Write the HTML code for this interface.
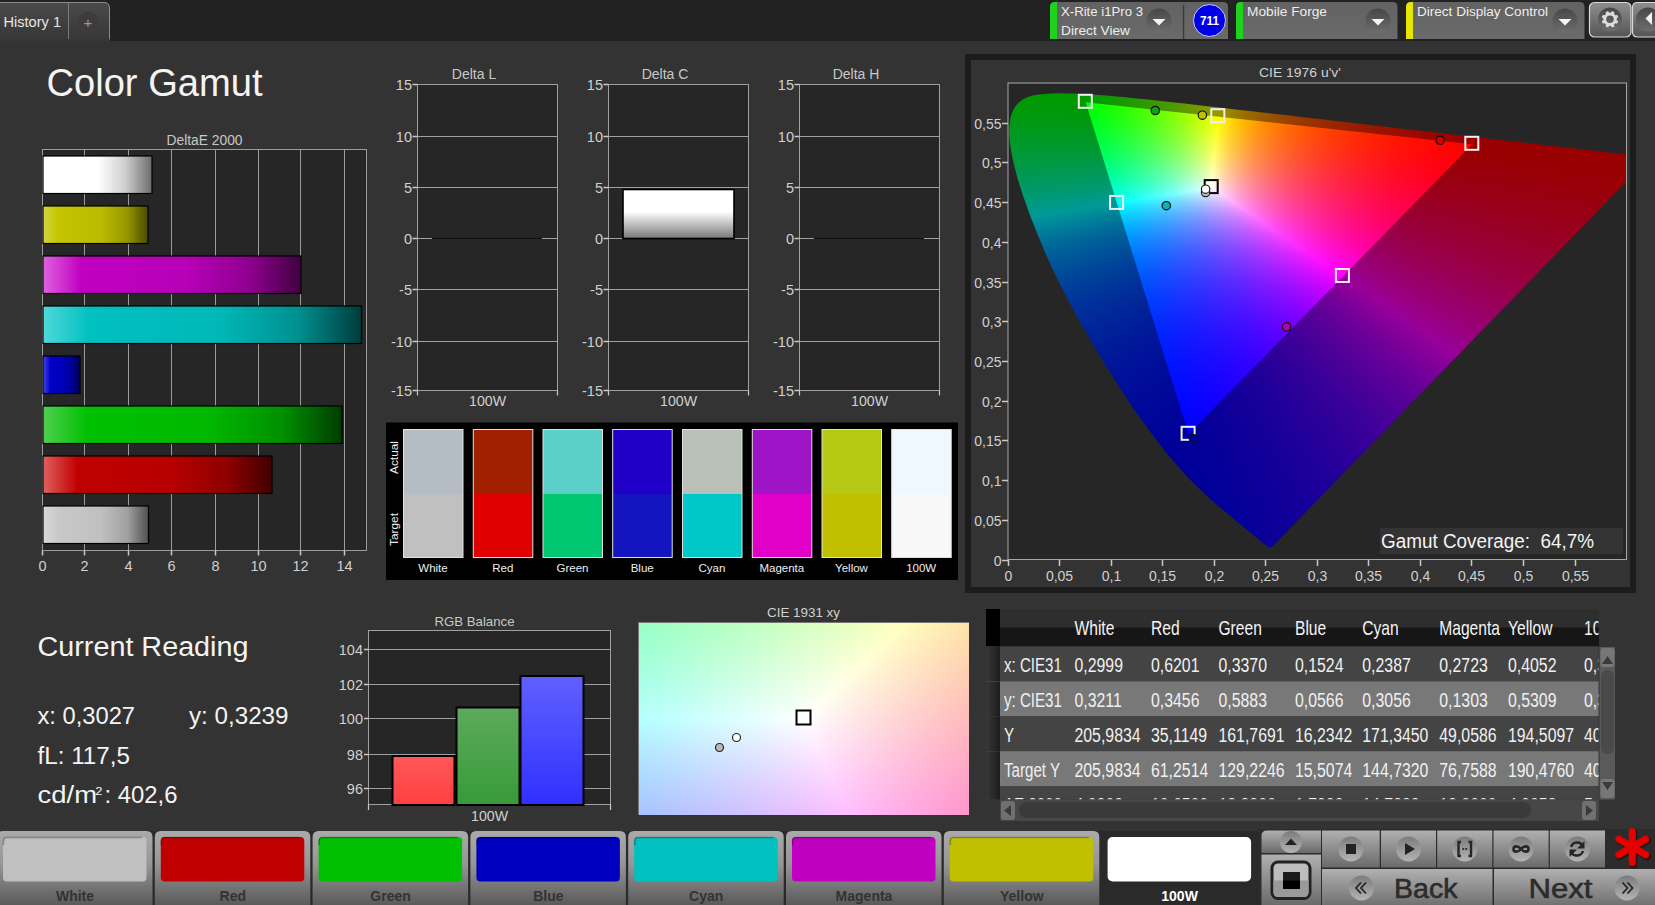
<!DOCTYPE html>
<html><head><meta charset="utf-8"><style>
html,body{margin:0;padding:0;background:#333;width:1655px;height:905px;overflow:hidden}
svg{position:absolute;left:0;top:0}
text{font-family:"Liberation Sans", sans-serif}
canvas{position:absolute}
</style></head><body>
<svg width="1655" height="905"><defs><linearGradient id="tabg" x1="0" y1="0" x2="0" y2="1"><stop offset="0" stop-color="#4a4a4a"/><stop offset="1" stop-color="#363636"/></linearGradient><radialGradient id="plusg" cx="0.5" cy="0.4" r="0.6"><stop offset="0" stop-color="#3a3a3a"/><stop offset="1" stop-color="#444"/></radialGradient><linearGradient id="devg" x1="0" y1="0" x2="0" y2="1"><stop offset="0" stop-color="#626262"/><stop offset="1" stop-color="#6a6a6a"/></linearGradient><linearGradient id="ddg" x1="0" y1="0" x2="0" y2="1"><stop offset="0" stop-color="#474747"/><stop offset="1" stop-color="#6e6e6e"/></linearGradient><linearGradient id="btng" x1="0" y1="0" x2="0" y2="1"><stop offset="0" stop-color="#8e8e8e"/><stop offset="1" stop-color="#545454"/></linearGradient><linearGradient id="bar0" x1="0" y1="0" x2="1" y2="0"><stop offset="0" stop-color="#ffffff"/><stop offset="0.3" stop-color="#ffffff"/><stop offset="0.5" stop-color="#ffffff"/><stop offset="0.75" stop-color="#d0d0d0"/><stop offset="1" stop-color="#6c6c6c"/></linearGradient><linearGradient id="bar1" x1="0" y1="0" x2="1" y2="0"><stop offset="0" stop-color="#d4d440"/><stop offset="0.15" stop-color="#c4c400"/><stop offset="0.55" stop-color="#bcbc00"/><stop offset="0.8" stop-color="#969600"/><stop offset="1" stop-color="#4a4a00"/></linearGradient><linearGradient id="bar2" x1="0" y1="0" x2="1" y2="0"><stop offset="0" stop-color="#e060e0"/><stop offset="0.15" stop-color="#c000c0"/><stop offset="0.55" stop-color="#b800b8"/><stop offset="0.8" stop-color="#900090"/><stop offset="1" stop-color="#400040"/></linearGradient><linearGradient id="bar3" x1="0" y1="0" x2="1" y2="0"><stop offset="0" stop-color="#50d8d8"/><stop offset="0.15" stop-color="#00c0c0"/><stop offset="0.55" stop-color="#00b8b8"/><stop offset="0.8" stop-color="#009090"/><stop offset="1" stop-color="#003c3c"/></linearGradient><linearGradient id="bar4" x1="0" y1="0" x2="1" y2="0"><stop offset="0" stop-color="#4848e8"/><stop offset="0.2" stop-color="#0000c8"/><stop offset="0.55" stop-color="#0000b8"/><stop offset="0.8" stop-color="#000090"/><stop offset="1" stop-color="#000050"/></linearGradient><linearGradient id="bar5" x1="0" y1="0" x2="1" y2="0"><stop offset="0" stop-color="#50d050"/><stop offset="0.15" stop-color="#00c000"/><stop offset="0.55" stop-color="#00b800"/><stop offset="0.8" stop-color="#009000"/><stop offset="1" stop-color="#003c00"/></linearGradient><linearGradient id="bar6" x1="0" y1="0" x2="1" y2="0"><stop offset="0" stop-color="#e06060"/><stop offset="0.15" stop-color="#c00000"/><stop offset="0.55" stop-color="#b80000"/><stop offset="0.8" stop-color="#900000"/><stop offset="1" stop-color="#400000"/></linearGradient><linearGradient id="bar7" x1="0" y1="0" x2="1" y2="0"><stop offset="0" stop-color="#d8d8d8"/><stop offset="0.15" stop-color="#c8c8c8"/><stop offset="0.55" stop-color="#c0c0c0"/><stop offset="0.8" stop-color="#a0a0a0"/><stop offset="1" stop-color="#505050"/></linearGradient><linearGradient id="dcg" x1="0" y1="0" x2="0" y2="1"><stop offset="0" stop-color="#ffffff"/><stop offset="0.45" stop-color="#ffffff"/><stop offset="1" stop-color="#787878"/></linearGradient><linearGradient id="rbr" x1="0" y1="0" x2="0" y2="1"><stop offset="0" stop-color="#ff5858"/><stop offset="1" stop-color="#ff4040"/></linearGradient><linearGradient id="rbg" x1="0" y1="0" x2="0" y2="1"><stop offset="0" stop-color="#5caa5c"/><stop offset="1" stop-color="#389a38"/></linearGradient><linearGradient id="rbb" x1="0" y1="0" x2="0" y2="1"><stop offset="0" stop-color="#6060ff"/><stop offset="1" stop-color="#3030ff"/></linearGradient><linearGradient id="lcg" x1="0" y1="0" x2="1" y2="0"><stop offset="0" stop-color="#383838"/><stop offset="1" stop-color="#1c1c1c"/></linearGradient><linearGradient id="bbg" x1="0" y1="0" x2="0" y2="1"><stop offset="0" stop-color="#aaaaaa"/><stop offset="0.45" stop-color="#969696"/><stop offset="1" stop-color="#5a5a5a"/></linearGradient><linearGradient id="mbg" x1="0" y1="0" x2="0" y2="1"><stop offset="0" stop-color="#b0b0b0"/><stop offset="1" stop-color="#6a6a6a"/></linearGradient><linearGradient id="mcg" x1="0" y1="0" x2="0" y2="1"><stop offset="0" stop-color="#7c7c7c"/><stop offset="1" stop-color="#b4b4b4"/></linearGradient></defs>
<rect x="0" y="0" width="1655" height="41" fill="#222222"/>
<path d="M-2 2.5 H104 Q109.5 2.5 109.5 8 V41 H-2 Z" fill="url(#tabg)"/>
<path d="M-2 2.5 H104 Q109.5 2.5 109.5 8 V39.5" fill="none" stroke="#8a8a8a" stroke-width="1"/>
<line x1="68.5" y1="3" x2="68.5" y2="39" stroke="#7a7a7a" stroke-width="1"/>
<circle cx="88" cy="23" r="11" fill="#3c3c3c"/>
<text x="88" y="28" font-size="15" fill="#9a9a9a" text-anchor="middle">+</text>
<text x="3.5" y="27.2" font-size="14.5" fill="#e6e6e6" textLength="57.5" lengthAdjust="spacingAndGlyphs">History 1</text>
<path d="M1050 39 V7 Q1050 2 1055 2 H1223 Q1228 2 1228 7 V39 Z" fill="url(#devg)"/>
<path d="M1050 39 V7 Q1050 2 1055 2 H1057 V39 Z" fill="#1ed21e"/>
<line x1="1183.5" y1="5" x2="1183.5" y2="39" stroke="#3c3c3c" stroke-width="1.5"/>
<text x="1061" y="16" font-size="12.5" fill="#eeeeee" textLength="82" lengthAdjust="spacingAndGlyphs">X-Rite i1Pro 3</text>
<text x="1061" y="35" font-size="12.5" fill="#eeeeee" textLength="69" lengthAdjust="spacingAndGlyphs">Direct View</text>
<circle cx="1159" cy="21" r="12.5" fill="url(#ddg)"/>
<path d="M1152.5 19 H1165.5 L1159 25.5 Z" fill="#f4f4f4"/>
<circle cx="1209.5" cy="20.5" r="16" fill="#0000e8" stroke="#c8c8ff" stroke-width="1"/>
<text x="1209.5" y="25" font-size="12" fill="#ffffff" text-anchor="middle" font-weight="bold" textLength="19" lengthAdjust="spacingAndGlyphs">711</text>
<path d="M1236 39 V7 Q1236 2 1241 2 H1392.5 Q1397.5 2 1397.5 7 V39 Z" fill="url(#devg)"/>
<path d="M1236 39 V7 Q1236 2 1241 2 H1243 V39 Z" fill="#1ed21e"/>
<text x="1247" y="16" font-size="12.5" fill="#eeeeee" textLength="80" lengthAdjust="spacingAndGlyphs">Mobile Forge</text>
<circle cx="1378" cy="21" r="12.5" fill="url(#ddg)"/>
<path d="M1371.5 19 H1384.5 L1378 25.5 Z" fill="#f4f4f4"/>
<path d="M1406 39 V7 Q1406 2 1411 2 H1579.5 Q1584.5 2 1584.5 7 V39 Z" fill="url(#devg)"/>
<path d="M1406 39 V7 Q1406 2 1411 2 H1413 V39 Z" fill="#e6e600"/>
<text x="1417" y="16" font-size="12.5" fill="#eeeeee" textLength="131" lengthAdjust="spacingAndGlyphs">Direct Display Control</text>
<circle cx="1565" cy="21" r="12.5" fill="url(#ddg)"/>
<path d="M1558.5 19 H1571.5 L1565 25.5 Z" fill="#f4f4f4"/>
<rect x="1589.5" y="2.5" width="41.5" height="34.5" rx="5" fill="url(#btng)" stroke="#d8d8d8" stroke-width="1.2"/>
<circle cx="1610" cy="19.5" r="12" fill="url(#ddg)"/>
<rect x="-1.5" y="-8.3" width="3" height="4" fill="#dcdcdc" transform="translate(1610 19.3) rotate(22.5)"/>
<rect x="-1.5" y="-8.3" width="3" height="4" fill="#dcdcdc" transform="translate(1610 19.3) rotate(67.5)"/>
<rect x="-1.5" y="-8.3" width="3" height="4" fill="#dcdcdc" transform="translate(1610 19.3) rotate(112.5)"/>
<rect x="-1.5" y="-8.3" width="3" height="4" fill="#dcdcdc" transform="translate(1610 19.3) rotate(157.5)"/>
<rect x="-1.5" y="-8.3" width="3" height="4" fill="#dcdcdc" transform="translate(1610 19.3) rotate(202.5)"/>
<rect x="-1.5" y="-8.3" width="3" height="4" fill="#dcdcdc" transform="translate(1610 19.3) rotate(247.5)"/>
<rect x="-1.5" y="-8.3" width="3" height="4" fill="#dcdcdc" transform="translate(1610 19.3) rotate(292.5)"/>
<rect x="-1.5" y="-8.3" width="3" height="4" fill="#dcdcdc" transform="translate(1610 19.3) rotate(337.5)"/>
<circle cx="1610" cy="19.3" r="5.3" fill="none" stroke="#dcdcdc" stroke-width="3"/>
<path d="M1660 2.5 H1637.5 Q1632.5 2.5 1632.5 7.5 V32 Q1632.5 37 1637.5 37 H1660" fill="url(#btng)" stroke="#d8d8d8" stroke-width="1.2"/>
<circle cx="1648" cy="19.5" r="12" fill="url(#ddg)"/>
<path d="M1645.5 18.5 L1652 12 V25 Z" fill="#f4f4f4"/>
<text x="46.5" y="95.8" font-size="38" fill="#f4f4f4" textLength="216" lengthAdjust="spacingAndGlyphs">Color Gamut</text>
<rect x="42.5" y="149.5" width="324.0" height="401.0" fill="#262626" stroke="#9c9c9c" stroke-width="1"/>
<text x="204.5" y="144.7" font-size="14" fill="#c8c8c8" text-anchor="middle" textLength="76" lengthAdjust="spacingAndGlyphs">DeltaE 2000</text>
<line x1="84.5" y1="149.5" x2="84.5" y2="550.5" stroke="#9c9c9c" stroke-width="1"/>
<line x1="128.5" y1="149.5" x2="128.5" y2="550.5" stroke="#9c9c9c" stroke-width="1"/>
<line x1="171.5" y1="149.5" x2="171.5" y2="550.5" stroke="#9c9c9c" stroke-width="1"/>
<line x1="215.5" y1="149.5" x2="215.5" y2="550.5" stroke="#9c9c9c" stroke-width="1"/>
<line x1="258.5" y1="149.5" x2="258.5" y2="550.5" stroke="#9c9c9c" stroke-width="1"/>
<line x1="300.5" y1="149.5" x2="300.5" y2="550.5" stroke="#9c9c9c" stroke-width="1"/>
<line x1="344.5" y1="149.5" x2="344.5" y2="550.5" stroke="#9c9c9c" stroke-width="1"/>
<line x1="42.5" y1="550.5" x2="42.5" y2="555.5" stroke="#c8c8c8" stroke-width="1.5"/>
<text x="42.5" y="570.5" font-size="14.5" fill="#d0d0d0" text-anchor="middle">0</text>
<line x1="84.5" y1="550.5" x2="84.5" y2="555.5" stroke="#c8c8c8" stroke-width="1.5"/>
<text x="84.5" y="570.5" font-size="14.5" fill="#d0d0d0" text-anchor="middle">2</text>
<line x1="128.5" y1="550.5" x2="128.5" y2="555.5" stroke="#c8c8c8" stroke-width="1.5"/>
<text x="128.5" y="570.5" font-size="14.5" fill="#d0d0d0" text-anchor="middle">4</text>
<line x1="171.5" y1="550.5" x2="171.5" y2="555.5" stroke="#c8c8c8" stroke-width="1.5"/>
<text x="171.5" y="570.5" font-size="14.5" fill="#d0d0d0" text-anchor="middle">6</text>
<line x1="215.5" y1="550.5" x2="215.5" y2="555.5" stroke="#c8c8c8" stroke-width="1.5"/>
<text x="215.5" y="570.5" font-size="14.5" fill="#d0d0d0" text-anchor="middle">8</text>
<line x1="258.5" y1="550.5" x2="258.5" y2="555.5" stroke="#c8c8c8" stroke-width="1.5"/>
<text x="258.5" y="570.5" font-size="14.5" fill="#d0d0d0" text-anchor="middle">10</text>
<line x1="300.5" y1="550.5" x2="300.5" y2="555.5" stroke="#c8c8c8" stroke-width="1.5"/>
<text x="300.5" y="570.5" font-size="14.5" fill="#d0d0d0" text-anchor="middle">12</text>
<line x1="344.5" y1="550.5" x2="344.5" y2="555.5" stroke="#c8c8c8" stroke-width="1.5"/>
<text x="344.5" y="570.5" font-size="14.5" fill="#d0d0d0" text-anchor="middle">14</text>
<rect x="43" y="156" width="109" height="37.5" fill="url(#bar0)" stroke="#000" stroke-width="1.2"/>
<rect x="43" y="206" width="105" height="37.5" fill="url(#bar1)" stroke="#000" stroke-width="1.2"/>
<rect x="43" y="256" width="258" height="37.5" fill="url(#bar2)" stroke="#000" stroke-width="1.2"/>
<rect x="43" y="306" width="318.5" height="37.5" fill="url(#bar3)" stroke="#000" stroke-width="1.2"/>
<rect x="43" y="356" width="37" height="37.5" fill="url(#bar4)" stroke="#000" stroke-width="1.2"/>
<rect x="43" y="406" width="299" height="37.5" fill="url(#bar5)" stroke="#000" stroke-width="1.2"/>
<rect x="43" y="456" width="229" height="37.5" fill="url(#bar6)" stroke="#000" stroke-width="1.2"/>
<rect x="43" y="506" width="105.5" height="37.5" fill="url(#bar7)" stroke="#000" stroke-width="1.2"/>
<rect x="417.5" y="84.5" width="140.0" height="306.0" fill="#262626" stroke="#a0a0a0" stroke-width="1"/>
<text x="474.0" y="78.9" font-size="14" fill="#c8c8c8" text-anchor="middle">Delta L</text>
<line x1="417.5" y1="84.5" x2="557.5" y2="84.5" stroke="#a0a0a0" stroke-width="1"/>
<line x1="412.5" y1="84.5" x2="417.5" y2="84.5" stroke="#c8c8c8" stroke-width="1.5"/>
<text x="412.0" y="90.1" font-size="14.5" fill="#d0d0d0" text-anchor="end">15</text>
<line x1="417.5" y1="136.5" x2="557.5" y2="136.5" stroke="#a0a0a0" stroke-width="1"/>
<line x1="412.5" y1="136.5" x2="417.5" y2="136.5" stroke="#c8c8c8" stroke-width="1.5"/>
<text x="412.0" y="142.1" font-size="14.5" fill="#d0d0d0" text-anchor="end">10</text>
<line x1="417.5" y1="187.5" x2="557.5" y2="187.5" stroke="#a0a0a0" stroke-width="1"/>
<line x1="412.5" y1="187.5" x2="417.5" y2="187.5" stroke="#c8c8c8" stroke-width="1.5"/>
<text x="412.0" y="193.1" font-size="14.5" fill="#d0d0d0" text-anchor="end">5</text>
<line x1="417.5" y1="238.5" x2="557.5" y2="238.5" stroke="#a0a0a0" stroke-width="1"/>
<line x1="412.5" y1="238.5" x2="417.5" y2="238.5" stroke="#c8c8c8" stroke-width="1.5"/>
<text x="412.0" y="244.1" font-size="14.5" fill="#d0d0d0" text-anchor="end">0</text>
<line x1="417.5" y1="289.5" x2="557.5" y2="289.5" stroke="#a0a0a0" stroke-width="1"/>
<line x1="412.5" y1="289.5" x2="417.5" y2="289.5" stroke="#c8c8c8" stroke-width="1.5"/>
<text x="412.0" y="295.1" font-size="14.5" fill="#d0d0d0" text-anchor="end">-5</text>
<line x1="417.5" y1="341.5" x2="557.5" y2="341.5" stroke="#a0a0a0" stroke-width="1"/>
<line x1="412.5" y1="341.5" x2="417.5" y2="341.5" stroke="#c8c8c8" stroke-width="1.5"/>
<text x="412.0" y="347.1" font-size="14.5" fill="#d0d0d0" text-anchor="end">-10</text>
<line x1="417.5" y1="390.5" x2="557.5" y2="390.5" stroke="#a0a0a0" stroke-width="1"/>
<line x1="412.5" y1="390.5" x2="417.5" y2="390.5" stroke="#c8c8c8" stroke-width="1.5"/>
<text x="412.0" y="396.1" font-size="14.5" fill="#d0d0d0" text-anchor="end">-15</text>
<line x1="417.5" y1="390.5" x2="417.5" y2="395.5" stroke="#c8c8c8" stroke-width="1.2"/>
<line x1="557.5" y1="390.5" x2="557.5" y2="395.5" stroke="#c8c8c8" stroke-width="1.2"/>
<text x="487.5" y="405.5" font-size="14" fill="#d0d0d0" text-anchor="middle" textLength="37" lengthAdjust="spacingAndGlyphs">100W</text>
<rect x="608.5" y="84.5" width="140.0" height="306.0" fill="#262626" stroke="#a0a0a0" stroke-width="1"/>
<text x="665.0" y="78.9" font-size="14" fill="#c8c8c8" text-anchor="middle">Delta C</text>
<line x1="608.5" y1="84.5" x2="748.5" y2="84.5" stroke="#a0a0a0" stroke-width="1"/>
<line x1="603.5" y1="84.5" x2="608.5" y2="84.5" stroke="#c8c8c8" stroke-width="1.5"/>
<text x="603.0" y="90.1" font-size="14.5" fill="#d0d0d0" text-anchor="end">15</text>
<line x1="608.5" y1="136.5" x2="748.5" y2="136.5" stroke="#a0a0a0" stroke-width="1"/>
<line x1="603.5" y1="136.5" x2="608.5" y2="136.5" stroke="#c8c8c8" stroke-width="1.5"/>
<text x="603.0" y="142.1" font-size="14.5" fill="#d0d0d0" text-anchor="end">10</text>
<line x1="608.5" y1="187.5" x2="748.5" y2="187.5" stroke="#a0a0a0" stroke-width="1"/>
<line x1="603.5" y1="187.5" x2="608.5" y2="187.5" stroke="#c8c8c8" stroke-width="1.5"/>
<text x="603.0" y="193.1" font-size="14.5" fill="#d0d0d0" text-anchor="end">5</text>
<line x1="608.5" y1="238.5" x2="748.5" y2="238.5" stroke="#a0a0a0" stroke-width="1"/>
<line x1="603.5" y1="238.5" x2="608.5" y2="238.5" stroke="#c8c8c8" stroke-width="1.5"/>
<text x="603.0" y="244.1" font-size="14.5" fill="#d0d0d0" text-anchor="end">0</text>
<line x1="608.5" y1="289.5" x2="748.5" y2="289.5" stroke="#a0a0a0" stroke-width="1"/>
<line x1="603.5" y1="289.5" x2="608.5" y2="289.5" stroke="#c8c8c8" stroke-width="1.5"/>
<text x="603.0" y="295.1" font-size="14.5" fill="#d0d0d0" text-anchor="end">-5</text>
<line x1="608.5" y1="341.5" x2="748.5" y2="341.5" stroke="#a0a0a0" stroke-width="1"/>
<line x1="603.5" y1="341.5" x2="608.5" y2="341.5" stroke="#c8c8c8" stroke-width="1.5"/>
<text x="603.0" y="347.1" font-size="14.5" fill="#d0d0d0" text-anchor="end">-10</text>
<line x1="608.5" y1="390.5" x2="748.5" y2="390.5" stroke="#a0a0a0" stroke-width="1"/>
<line x1="603.5" y1="390.5" x2="608.5" y2="390.5" stroke="#c8c8c8" stroke-width="1.5"/>
<text x="603.0" y="396.1" font-size="14.5" fill="#d0d0d0" text-anchor="end">-15</text>
<line x1="608.5" y1="390.5" x2="608.5" y2="395.5" stroke="#c8c8c8" stroke-width="1.2"/>
<line x1="748.5" y1="390.5" x2="748.5" y2="395.5" stroke="#c8c8c8" stroke-width="1.2"/>
<text x="678.5" y="405.5" font-size="14" fill="#d0d0d0" text-anchor="middle" textLength="37" lengthAdjust="spacingAndGlyphs">100W</text>
<rect x="799.5" y="84.5" width="140.0" height="306.0" fill="#262626" stroke="#a0a0a0" stroke-width="1"/>
<text x="856.0" y="78.9" font-size="14" fill="#c8c8c8" text-anchor="middle">Delta H</text>
<line x1="799.5" y1="84.5" x2="939.5" y2="84.5" stroke="#a0a0a0" stroke-width="1"/>
<line x1="794.5" y1="84.5" x2="799.5" y2="84.5" stroke="#c8c8c8" stroke-width="1.5"/>
<text x="794.0" y="90.1" font-size="14.5" fill="#d0d0d0" text-anchor="end">15</text>
<line x1="799.5" y1="136.5" x2="939.5" y2="136.5" stroke="#a0a0a0" stroke-width="1"/>
<line x1="794.5" y1="136.5" x2="799.5" y2="136.5" stroke="#c8c8c8" stroke-width="1.5"/>
<text x="794.0" y="142.1" font-size="14.5" fill="#d0d0d0" text-anchor="end">10</text>
<line x1="799.5" y1="187.5" x2="939.5" y2="187.5" stroke="#a0a0a0" stroke-width="1"/>
<line x1="794.5" y1="187.5" x2="799.5" y2="187.5" stroke="#c8c8c8" stroke-width="1.5"/>
<text x="794.0" y="193.1" font-size="14.5" fill="#d0d0d0" text-anchor="end">5</text>
<line x1="799.5" y1="238.5" x2="939.5" y2="238.5" stroke="#a0a0a0" stroke-width="1"/>
<line x1="794.5" y1="238.5" x2="799.5" y2="238.5" stroke="#c8c8c8" stroke-width="1.5"/>
<text x="794.0" y="244.1" font-size="14.5" fill="#d0d0d0" text-anchor="end">0</text>
<line x1="799.5" y1="289.5" x2="939.5" y2="289.5" stroke="#a0a0a0" stroke-width="1"/>
<line x1="794.5" y1="289.5" x2="799.5" y2="289.5" stroke="#c8c8c8" stroke-width="1.5"/>
<text x="794.0" y="295.1" font-size="14.5" fill="#d0d0d0" text-anchor="end">-5</text>
<line x1="799.5" y1="341.5" x2="939.5" y2="341.5" stroke="#a0a0a0" stroke-width="1"/>
<line x1="794.5" y1="341.5" x2="799.5" y2="341.5" stroke="#c8c8c8" stroke-width="1.5"/>
<text x="794.0" y="347.1" font-size="14.5" fill="#d0d0d0" text-anchor="end">-10</text>
<line x1="799.5" y1="390.5" x2="939.5" y2="390.5" stroke="#a0a0a0" stroke-width="1"/>
<line x1="794.5" y1="390.5" x2="799.5" y2="390.5" stroke="#c8c8c8" stroke-width="1.5"/>
<text x="794.0" y="396.1" font-size="14.5" fill="#d0d0d0" text-anchor="end">-15</text>
<line x1="799.5" y1="390.5" x2="799.5" y2="395.5" stroke="#c8c8c8" stroke-width="1.2"/>
<line x1="939.5" y1="390.5" x2="939.5" y2="395.5" stroke="#c8c8c8" stroke-width="1.2"/>
<text x="869.5" y="405.5" font-size="14" fill="#d0d0d0" text-anchor="middle" textLength="37" lengthAdjust="spacingAndGlyphs">100W</text>
<line x1="432" y1="238.5" x2="542" y2="238.5" stroke="#111" stroke-width="1"/>
<line x1="814" y1="238.5" x2="924" y2="238.5" stroke="#111" stroke-width="1"/>
<rect x="623" y="189.5" width="111" height="49" fill="url(#dcg)" stroke="#000" stroke-width="1.6"/>
<rect x="386" y="422.5" width="572" height="157.5" fill="#000000"/>
<rect x="403.5" y="429.5" width="59.5" height="64.5" fill="#b4bcc4"/>
<rect x="403.5" y="494" width="59.5" height="63.5" fill="#c0c0c0"/>
<rect x="403.5" y="429.5" width="59.5" height="128" fill="none" stroke="#e0e0e0" stroke-width="1"/>
<text x="433.0" y="571.6" font-size="11.5" fill="#eeeeee" text-anchor="middle">White</text>
<rect x="473.3" y="429.5" width="59.5" height="64.5" fill="#a02000"/>
<rect x="473.3" y="494" width="59.5" height="63.5" fill="#e00000"/>
<rect x="473.3" y="429.5" width="59.5" height="128" fill="none" stroke="#e0e0e0" stroke-width="1"/>
<text x="502.8" y="571.6" font-size="11.5" fill="#eeeeee" text-anchor="middle">Red</text>
<rect x="543.0" y="429.5" width="59.5" height="64.5" fill="#5ad0c8"/>
<rect x="543.0" y="494" width="59.5" height="63.5" fill="#00c870"/>
<rect x="543.0" y="429.5" width="59.5" height="128" fill="none" stroke="#e0e0e0" stroke-width="1"/>
<text x="572.5" y="571.6" font-size="11.5" fill="#eeeeee" text-anchor="middle">Green</text>
<rect x="612.7" y="429.5" width="59.5" height="64.5" fill="#2000c8"/>
<rect x="612.7" y="494" width="59.5" height="63.5" fill="#1414c0"/>
<rect x="612.7" y="429.5" width="59.5" height="128" fill="none" stroke="#e0e0e0" stroke-width="1"/>
<text x="642.2" y="571.6" font-size="11.5" fill="#eeeeee" text-anchor="middle">Blue</text>
<rect x="682.5" y="429.5" width="59.5" height="64.5" fill="#b8c0b8"/>
<rect x="682.5" y="494" width="59.5" height="63.5" fill="#00c8c8"/>
<rect x="682.5" y="429.5" width="59.5" height="128" fill="none" stroke="#e0e0e0" stroke-width="1"/>
<text x="712.0" y="571.6" font-size="11.5" fill="#eeeeee" text-anchor="middle">Cyan</text>
<rect x="752.3" y="429.5" width="59.5" height="64.5" fill="#a014c8"/>
<rect x="752.3" y="494" width="59.5" height="63.5" fill="#e000c8"/>
<rect x="752.3" y="429.5" width="59.5" height="128" fill="none" stroke="#e0e0e0" stroke-width="1"/>
<text x="781.8" y="571.6" font-size="11.5" fill="#eeeeee" text-anchor="middle">Magenta</text>
<rect x="822.0" y="429.5" width="59.5" height="64.5" fill="#b4c814"/>
<rect x="822.0" y="494" width="59.5" height="63.5" fill="#c0c000"/>
<rect x="822.0" y="429.5" width="59.5" height="128" fill="none" stroke="#e0e0e0" stroke-width="1"/>
<text x="851.5" y="571.6" font-size="11.5" fill="#eeeeee" text-anchor="middle">Yellow</text>
<rect x="891.7" y="429.5" width="59.5" height="64.5" fill="#f0f8ff"/>
<rect x="891.7" y="494" width="59.5" height="63.5" fill="#f8f8f8"/>
<rect x="891.7" y="429.5" width="59.5" height="128" fill="none" stroke="#e0e0e0" stroke-width="1"/>
<text x="921.2" y="571.6" font-size="11.5" fill="#eeeeee" text-anchor="middle">100W</text>
<text transform="translate(397.7 474) rotate(-90)" font-size="11.5" fill="#eeeeee" textLength="33" lengthAdjust="spacingAndGlyphs">Actual</text>
<text transform="translate(397.7 546) rotate(-90)" font-size="11.5" fill="#eeeeee" textLength="33" lengthAdjust="spacingAndGlyphs">Target</text>
<rect x="968" y="57" width="665" height="533" fill="#333" stroke="#1c1c1c" stroke-width="6"/>
<rect x="1008" y="83" width="618.5" height="476.5" fill="#262626" stroke="#a8a8a8" stroke-width="1"/>
<text x="1300" y="77" font-size="13" fill="#d0d0d0" text-anchor="middle" textLength="82" lengthAdjust="spacingAndGlyphs">CIE 1976 u'v'</text>
<line x1="1002" y1="560.5" x2="1008" y2="560.5" stroke="#c8c8c8" stroke-width="1.5"/>
<text x="1001.5" y="565.5" font-size="14" fill="#d0d0d0" text-anchor="end">0</text>
<line x1="1008.5" y1="560" x2="1008.5" y2="566" stroke="#c8c8c8" stroke-width="1.5"/>
<text x="1008.5" y="580.5" font-size="14" fill="#d0d0d0" text-anchor="middle">0</text>
<line x1="1002" y1="520.5" x2="1008" y2="520.5" stroke="#c8c8c8" stroke-width="1.5"/>
<text x="1001.5" y="525.5" font-size="14" fill="#d0d0d0" text-anchor="end">0,05</text>
<line x1="1059.5" y1="560" x2="1059.5" y2="566" stroke="#c8c8c8" stroke-width="1.5"/>
<text x="1059.5" y="580.5" font-size="14" fill="#d0d0d0" text-anchor="middle">0,05</text>
<line x1="1002" y1="480.5" x2="1008" y2="480.5" stroke="#c8c8c8" stroke-width="1.5"/>
<text x="1001.5" y="485.5" font-size="14" fill="#d0d0d0" text-anchor="end">0,1</text>
<line x1="1111.5" y1="560" x2="1111.5" y2="566" stroke="#c8c8c8" stroke-width="1.5"/>
<text x="1111.5" y="580.5" font-size="14" fill="#d0d0d0" text-anchor="middle">0,1</text>
<line x1="1002" y1="440.5" x2="1008" y2="440.5" stroke="#c8c8c8" stroke-width="1.5"/>
<text x="1001.5" y="445.5" font-size="14" fill="#d0d0d0" text-anchor="end">0,15</text>
<line x1="1162.5" y1="560" x2="1162.5" y2="566" stroke="#c8c8c8" stroke-width="1.5"/>
<text x="1162.5" y="580.5" font-size="14" fill="#d0d0d0" text-anchor="middle">0,15</text>
<line x1="1002" y1="401.5" x2="1008" y2="401.5" stroke="#c8c8c8" stroke-width="1.5"/>
<text x="1001.5" y="406.5" font-size="14" fill="#d0d0d0" text-anchor="end">0,2</text>
<line x1="1214.5" y1="560" x2="1214.5" y2="566" stroke="#c8c8c8" stroke-width="1.5"/>
<text x="1214.5" y="580.5" font-size="14" fill="#d0d0d0" text-anchor="middle">0,2</text>
<line x1="1002" y1="361.5" x2="1008" y2="361.5" stroke="#c8c8c8" stroke-width="1.5"/>
<text x="1001.5" y="366.5" font-size="14" fill="#d0d0d0" text-anchor="end">0,25</text>
<line x1="1265.5" y1="560" x2="1265.5" y2="566" stroke="#c8c8c8" stroke-width="1.5"/>
<text x="1265.5" y="580.5" font-size="14" fill="#d0d0d0" text-anchor="middle">0,25</text>
<line x1="1002" y1="321.5" x2="1008" y2="321.5" stroke="#c8c8c8" stroke-width="1.5"/>
<text x="1001.5" y="326.5" font-size="14" fill="#d0d0d0" text-anchor="end">0,3</text>
<line x1="1317.5" y1="560" x2="1317.5" y2="566" stroke="#c8c8c8" stroke-width="1.5"/>
<text x="1317.5" y="580.5" font-size="14" fill="#d0d0d0" text-anchor="middle">0,3</text>
<line x1="1002" y1="282.5" x2="1008" y2="282.5" stroke="#c8c8c8" stroke-width="1.5"/>
<text x="1001.5" y="287.5" font-size="14" fill="#d0d0d0" text-anchor="end">0,35</text>
<line x1="1368.5" y1="560" x2="1368.5" y2="566" stroke="#c8c8c8" stroke-width="1.5"/>
<text x="1368.5" y="580.5" font-size="14" fill="#d0d0d0" text-anchor="middle">0,35</text>
<line x1="1002" y1="242.5" x2="1008" y2="242.5" stroke="#c8c8c8" stroke-width="1.5"/>
<text x="1001.5" y="247.5" font-size="14" fill="#d0d0d0" text-anchor="end">0,4</text>
<line x1="1420.5" y1="560" x2="1420.5" y2="566" stroke="#c8c8c8" stroke-width="1.5"/>
<text x="1420.5" y="580.5" font-size="14" fill="#d0d0d0" text-anchor="middle">0,4</text>
<line x1="1002" y1="202.5" x2="1008" y2="202.5" stroke="#c8c8c8" stroke-width="1.5"/>
<text x="1001.5" y="207.5" font-size="14" fill="#d0d0d0" text-anchor="end">0,45</text>
<line x1="1471.5" y1="560" x2="1471.5" y2="566" stroke="#c8c8c8" stroke-width="1.5"/>
<text x="1471.5" y="580.5" font-size="14" fill="#d0d0d0" text-anchor="middle">0,45</text>
<line x1="1002" y1="162.5" x2="1008" y2="162.5" stroke="#c8c8c8" stroke-width="1.5"/>
<text x="1001.5" y="167.5" font-size="14" fill="#d0d0d0" text-anchor="end">0,5</text>
<line x1="1523.5" y1="560" x2="1523.5" y2="566" stroke="#c8c8c8" stroke-width="1.5"/>
<text x="1523.5" y="580.5" font-size="14" fill="#d0d0d0" text-anchor="middle">0,5</text>
<line x1="1002" y1="123.5" x2="1008" y2="123.5" stroke="#c8c8c8" stroke-width="1.5"/>
<text x="1001.5" y="128.5" font-size="14" fill="#d0d0d0" text-anchor="end">0,55</text>
<line x1="1575.5" y1="560" x2="1575.5" y2="566" stroke="#c8c8c8" stroke-width="1.5"/>
<text x="1575.5" y="580.5" font-size="14" fill="#d0d0d0" text-anchor="middle">0,55</text>
<text x="37.5" y="656.4" font-size="27" fill="#f4f4f4" textLength="211" lengthAdjust="spacingAndGlyphs">Current Reading</text>
<text x="37.5" y="724.3" font-size="23" fill="#f4f4f4" textLength="97.5" lengthAdjust="spacingAndGlyphs">x: 0,3027</text>
<text x="189" y="724.3" font-size="23" fill="#f4f4f4" textLength="99.5" lengthAdjust="spacingAndGlyphs">y: 0,3239</text>
<text x="37.5" y="763.6" font-size="23" fill="#f4f4f4" textLength="92.5" lengthAdjust="spacingAndGlyphs">fL: 117,5</text>
<text x="37.5" y="803.3" font-size="23" fill="#f4f4f4" textLength="59.5" lengthAdjust="spacingAndGlyphs">cd/m</text>
<text x="95.2" y="794.6" font-size="11.8" fill="#f4f4f4" textLength="7.2" lengthAdjust="spacingAndGlyphs">2</text>
<text x="104.5" y="803.3" font-size="23" fill="#f4f4f4" textLength="73" lengthAdjust="spacingAndGlyphs">: 402,6</text>
<rect x="368.5" y="630.5" width="242" height="174" fill="#262626" stroke="#a0a0a0" stroke-width="1"/>
<text x="474.5" y="626.1" font-size="13.5" fill="#c8c8c8" text-anchor="middle" textLength="80" lengthAdjust="spacingAndGlyphs">RGB Balance</text>
<line x1="368.5" y1="649.5" x2="610.5" y2="649.5" stroke="#a0a0a0" stroke-width="1"/>
<line x1="364" y1="649.5" x2="368.5" y2="649.5" stroke="#c8c8c8" stroke-width="1.5"/>
<text x="363" y="654.5" font-size="14.5" fill="#d0d0d0" text-anchor="end">104</text>
<line x1="368.5" y1="684.5" x2="610.5" y2="684.5" stroke="#a0a0a0" stroke-width="1"/>
<line x1="364" y1="684.5" x2="368.5" y2="684.5" stroke="#c8c8c8" stroke-width="1.5"/>
<text x="363" y="689.5" font-size="14.5" fill="#d0d0d0" text-anchor="end">102</text>
<line x1="368.5" y1="718.5" x2="610.5" y2="718.5" stroke="#a0a0a0" stroke-width="1"/>
<line x1="364" y1="718.5" x2="368.5" y2="718.5" stroke="#c8c8c8" stroke-width="1.5"/>
<text x="363" y="723.5" font-size="14.5" fill="#d0d0d0" text-anchor="end">100</text>
<line x1="368.5" y1="754.5" x2="610.5" y2="754.5" stroke="#a0a0a0" stroke-width="1"/>
<line x1="364" y1="754.5" x2="368.5" y2="754.5" stroke="#c8c8c8" stroke-width="1.5"/>
<text x="363" y="759.5" font-size="14.5" fill="#d0d0d0" text-anchor="end">98</text>
<line x1="368.5" y1="788.5" x2="610.5" y2="788.5" stroke="#a0a0a0" stroke-width="1"/>
<line x1="364" y1="788.5" x2="368.5" y2="788.5" stroke="#c8c8c8" stroke-width="1.5"/>
<text x="363" y="793.5" font-size="14.5" fill="#d0d0d0" text-anchor="end">96</text>
<line x1="368.5" y1="804.5" x2="368.5" y2="810" stroke="#c8c8c8" stroke-width="1.2"/>
<line x1="610.5" y1="804.5" x2="610.5" y2="810" stroke="#c8c8c8" stroke-width="1.2"/>
<text x="489.5" y="820.8" font-size="14" fill="#d0d0d0" text-anchor="middle" textLength="37" lengthAdjust="spacingAndGlyphs">100W</text>
<rect x="392.5" y="756" width="62" height="49" fill="url(#rbr)" stroke="#000" stroke-width="2"/>
<rect x="456.5" y="707.5" width="63" height="97.5" fill="url(#rbg)" stroke="#000" stroke-width="2"/>
<rect x="520.5" y="676" width="63" height="129" fill="url(#rbb)" stroke="#000" stroke-width="2"/>
<text x="803.5" y="617" font-size="13.5" fill="#d0d0d0" text-anchor="middle" textLength="73" lengthAdjust="spacingAndGlyphs">CIE 1931 xy</text>
<rect x="638" y="622" width="331" height="192.5" fill="#777"/>
<rect x="986" y="609" width="613" height="37.5" fill="#161616"/>
<rect x="1000" y="609" width="599" height="18.5" fill="#2e2e2e"/>
<rect x="986" y="609" width="14" height="37.5" fill="#000000"/>
<defs><clipPath id="tclip"><rect x="986" y="600" width="612.5" height="199.5"/></clipPath></defs>
<g clip-path="url(#tclip)"><rect x="986" y="646.5" width="613" height="35" fill="#444444"/><rect x="986" y="646.5" width="14" height="35" fill="url(#lcg)"/><rect x="986" y="681.4" width="613" height="35" fill="#787878"/><rect x="986" y="681.4" width="14" height="35" fill="url(#lcg)"/><rect x="986" y="716.3" width="613" height="35" fill="#444444"/><rect x="986" y="716.3" width="14" height="35" fill="url(#lcg)"/><rect x="986" y="751.2" width="613" height="35" fill="#787878"/><rect x="986" y="751.2" width="14" height="35" fill="url(#lcg)"/><rect x="986" y="786.1" width="613" height="35" fill="#444444"/><rect x="986" y="786.1" width="14" height="35" fill="url(#lcg)"/><text x="1004" y="672.0" font-size="21" fill="#f0f0f0" transform="translate(281.12 0) scale(0.72 1)" >x: CIE31</text><text x="1423.1788079470198" y="672.0" font-size="21" fill="#f0f0f0" transform="scale(0.755 1)">0,2999</text><text x="1524.5033112582782" y="672.0" font-size="21" fill="#f0f0f0" transform="scale(0.755 1)">0,6201</text><text x="1613.9072847682119" y="672.0" font-size="21" fill="#f0f0f0" transform="scale(0.755 1)">0,3370</text><text x="1715.23178807947" y="672.0" font-size="21" fill="#f0f0f0" transform="scale(0.755 1)">0,1524</text><text x="1804.3708609271523" y="672.0" font-size="21" fill="#f0f0f0" transform="scale(0.755 1)">0,2387</text><text x="1906.3576158940396" y="672.0" font-size="21" fill="#f0f0f0" transform="scale(0.755 1)">0,2723</text><text x="1997.3509933774835" y="672.0" font-size="21" fill="#f0f0f0" transform="scale(0.755 1)">0,4052</text><text x="2098.0132450331125" y="672.0" font-size="21" fill="#f0f0f0" transform="scale(0.755 1)">0,3</text><text x="1004" y="706.9" font-size="21" fill="#f0f0f0" transform="translate(281.12 0) scale(0.72 1)" >y: CIE31</text><text x="1423.1788079470198" y="706.9" font-size="21" fill="#f0f0f0" transform="scale(0.755 1)">0,3211</text><text x="1524.5033112582782" y="706.9" font-size="21" fill="#f0f0f0" transform="scale(0.755 1)">0,3456</text><text x="1613.9072847682119" y="706.9" font-size="21" fill="#f0f0f0" transform="scale(0.755 1)">0,5883</text><text x="1715.23178807947" y="706.9" font-size="21" fill="#f0f0f0" transform="scale(0.755 1)">0,0566</text><text x="1804.3708609271523" y="706.9" font-size="21" fill="#f0f0f0" transform="scale(0.755 1)">0,3056</text><text x="1906.3576158940396" y="706.9" font-size="21" fill="#f0f0f0" transform="scale(0.755 1)">0,1303</text><text x="1997.3509933774835" y="706.9" font-size="21" fill="#f0f0f0" transform="scale(0.755 1)">0,5309</text><text x="2098.0132450331125" y="706.9" font-size="21" fill="#f0f0f0" transform="scale(0.755 1)">0,3</text><text x="1004" y="741.8" font-size="21" fill="#f0f0f0" transform="translate(281.12 0) scale(0.72 1)" >Y</text><text x="1423.1788079470198" y="741.8" font-size="21" fill="#f0f0f0" transform="scale(0.755 1)">205,9834</text><text x="1524.5033112582782" y="741.8" font-size="21" fill="#f0f0f0" transform="scale(0.755 1)">35,1149</text><text x="1613.9072847682119" y="741.8" font-size="21" fill="#f0f0f0" transform="scale(0.755 1)">161,7691</text><text x="1715.23178807947" y="741.8" font-size="21" fill="#f0f0f0" transform="scale(0.755 1)">16,2342</text><text x="1804.3708609271523" y="741.8" font-size="21" fill="#f0f0f0" transform="scale(0.755 1)">171,3450</text><text x="1906.3576158940396" y="741.8" font-size="21" fill="#f0f0f0" transform="scale(0.755 1)">49,0586</text><text x="1997.3509933774835" y="741.8" font-size="21" fill="#f0f0f0" transform="scale(0.755 1)">194,5097</text><text x="2098.0132450331125" y="741.8" font-size="21" fill="#f0f0f0" transform="scale(0.755 1)">402,6</text><text x="1004" y="776.7" font-size="21" fill="#f0f0f0" transform="translate(281.12 0) scale(0.72 1)" >Target Y</text><text x="1423.1788079470198" y="776.7" font-size="21" fill="#f0f0f0" transform="scale(0.755 1)">205,9834</text><text x="1524.5033112582782" y="776.7" font-size="21" fill="#f0f0f0" transform="scale(0.755 1)">61,2514</text><text x="1613.9072847682119" y="776.7" font-size="21" fill="#f0f0f0" transform="scale(0.755 1)">129,2246</text><text x="1715.23178807947" y="776.7" font-size="21" fill="#f0f0f0" transform="scale(0.755 1)">15,5074</text><text x="1804.3708609271523" y="776.7" font-size="21" fill="#f0f0f0" transform="scale(0.755 1)">144,7320</text><text x="1906.3576158940396" y="776.7" font-size="21" fill="#f0f0f0" transform="scale(0.755 1)">76,7588</text><text x="1997.3509933774835" y="776.7" font-size="21" fill="#f0f0f0" transform="scale(0.755 1)">190,4760</text><text x="2098.0132450331125" y="776.7" font-size="21" fill="#f0f0f0" transform="scale(0.755 1)">402,6</text><text x="1004" y="811.6" font-size="21" fill="#f0f0f0" transform="translate(281.12 0) scale(0.72 1)" >ΔE 2000</text><text x="1423.1788079470198" y="811.6" font-size="21" fill="#f0f0f0" transform="scale(0.755 1)">4,0363</text><text x="1524.5033112582782" y="811.6" font-size="21" fill="#f0f0f0" transform="scale(0.755 1)">10,6599</text><text x="1613.9072847682119" y="811.6" font-size="21" fill="#f0f0f0" transform="scale(0.755 1)">13,8806</text><text x="1715.23178807947" y="811.6" font-size="21" fill="#f0f0f0" transform="scale(0.755 1)">1,7323</text><text x="1804.3708609271523" y="811.6" font-size="21" fill="#f0f0f0" transform="scale(0.755 1)">14,7883</text><text x="1906.3576158940396" y="811.6" font-size="21" fill="#f0f0f0" transform="scale(0.755 1)">12,0000</text><text x="1997.3509933774835" y="811.6" font-size="21" fill="#f0f0f0" transform="scale(0.755 1)">4,9058</text><text x="2098.0132450331125" y="811.6" font-size="21" fill="#f0f0f0" transform="scale(0.755 1)">5,0</text><text x="1377.5641025641025" y="635" font-size="20" fill="#f4f4f4" transform="scale(0.78 1)">White</text><text x="1475.6410256410256" y="635" font-size="20" fill="#f4f4f4" transform="scale(0.78 1)">Red</text><text x="1562.179487179487" y="635" font-size="20" fill="#f4f4f4" transform="scale(0.78 1)">Green</text><text x="1660.2564102564102" y="635" font-size="20" fill="#f4f4f4" transform="scale(0.78 1)">Blue</text><text x="1746.5384615384614" y="635" font-size="20" fill="#f4f4f4" transform="scale(0.78 1)">Cyan</text><text x="1845.2564102564102" y="635" font-size="20" fill="#f4f4f4" transform="scale(0.78 1)">Magenta</text><text x="1933.3333333333333" y="635" font-size="20" fill="#f4f4f4" transform="scale(0.78 1)">Yellow</text><text x="2030.7692307692307" y="635" font-size="20" fill="#f4f4f4" transform="scale(0.78 1)">100W</text></g>
<rect x="1000" y="799.5" width="599" height="21.5" fill="#474747"/>
<rect x="1019" y="802" width="512" height="16" rx="8" fill="#3a3a3a"/>
<rect x="1001" y="801" width="14" height="19" rx="3" fill="#707070"/>
<path d="M1004 810.5 L1011 805 V816 Z" fill="#3a3a3a"/>
<rect x="1582" y="801" width="14" height="19" rx="3" fill="#707070"/>
<path d="M1593 810.5 L1586 805 V816 Z" fill="#3a3a3a"/>
<rect x="1599.5" y="647" width="15.5" height="152.5" fill="#5a5a5a"/>
<rect x="1600.5" y="648" width="14" height="19" rx="3" fill="#777"/>
<path d="M1602 664 L1607.5 656 L1613 664 Z" fill="#3a3a3a"/>
<rect x="1601" y="670" width="13" height="84" rx="6" fill="#4a4a4a"/>
<rect x="1600.5" y="779" width="14" height="19" rx="3" fill="#777"/>
<path d="M1602 782 L1607.5 790 L1613 782 Z" fill="#3a3a3a"/>
<rect x="0" y="831" width="1260" height="74" fill="#2a2a2a"/>
<path d="M-3.0 905 V837 Q-3.0 831 3.0 831 H146.5 Q152.5 831 152.5 837 V905 Z" fill="url(#bbg)"/>
<rect x="3.0" y="837" width="143.5" height="44.5" rx="4" fill="#c0c0c0"/>
<path d="M3.5 845 V841 Q3.5 837.5 7.0 837.5 H142.0" fill="none" stroke="#000" stroke-opacity="0.3" stroke-width="1.5"/>
<text x="75.0" y="901" font-size="14" fill="#333333" text-anchor="middle" font-weight="bold">White</text>
<path d="M154.8 905 V837 Q154.8 831 160.8 831 H304.3 Q310.3 831 310.3 837 V905 Z" fill="url(#bbg)"/>
<rect x="160.8" y="837" width="143.5" height="44.5" rx="4" fill="#c00000"/>
<path d="M161.3 845 V841 Q161.3 837.5 164.8 837.5 H299.8" fill="none" stroke="#000" stroke-opacity="0.3" stroke-width="1.5"/>
<text x="232.8" y="901" font-size="14" fill="#333333" text-anchor="middle" font-weight="bold">Red</text>
<path d="M312.6 905 V837 Q312.6 831 318.6 831 H462.1 Q468.1 831 468.1 837 V905 Z" fill="url(#bbg)"/>
<rect x="318.6" y="837" width="143.5" height="44.5" rx="4" fill="#00c000"/>
<path d="M319.1 845 V841 Q319.1 837.5 322.6 837.5 H457.6" fill="none" stroke="#000" stroke-opacity="0.3" stroke-width="1.5"/>
<text x="390.6" y="901" font-size="14" fill="#333333" text-anchor="middle" font-weight="bold">Green</text>
<path d="M470.40000000000003 905 V837 Q470.40000000000003 831 476.40000000000003 831 H619.9000000000001 Q625.9000000000001 831 625.9000000000001 837 V905 Z" fill="url(#bbg)"/>
<rect x="476.40000000000003" y="837" width="143.5" height="44.5" rx="4" fill="#0000c0"/>
<path d="M476.90000000000003 845 V841 Q476.90000000000003 837.5 480.40000000000003 837.5 H615.4000000000001" fill="none" stroke="#000" stroke-opacity="0.3" stroke-width="1.5"/>
<text x="548.4000000000001" y="901" font-size="14" fill="#333333" text-anchor="middle" font-weight="bold">Blue</text>
<path d="M628.2 905 V837 Q628.2 831 634.2 831 H777.7 Q783.7 831 783.7 837 V905 Z" fill="url(#bbg)"/>
<rect x="634.2" y="837" width="143.5" height="44.5" rx="4" fill="#00c0c0"/>
<path d="M634.7 845 V841 Q634.7 837.5 638.2 837.5 H773.2" fill="none" stroke="#000" stroke-opacity="0.3" stroke-width="1.5"/>
<text x="706.2" y="901" font-size="14" fill="#333333" text-anchor="middle" font-weight="bold">Cyan</text>
<path d="M786.0 905 V837 Q786.0 831 792.0 831 H935.5 Q941.5 831 941.5 837 V905 Z" fill="url(#bbg)"/>
<rect x="792.0" y="837" width="143.5" height="44.5" rx="4" fill="#c000c0"/>
<path d="M792.5 845 V841 Q792.5 837.5 796.0 837.5 H931.0" fill="none" stroke="#000" stroke-opacity="0.3" stroke-width="1.5"/>
<text x="864.0" y="901" font-size="14" fill="#333333" text-anchor="middle" font-weight="bold">Magenta</text>
<path d="M943.8000000000001 905 V837 Q943.8000000000001 831 949.8000000000001 831 H1093.3000000000002 Q1099.3000000000002 831 1099.3000000000002 837 V905 Z" fill="url(#bbg)"/>
<rect x="949.8000000000001" y="837" width="143.5" height="44.5" rx="4" fill="#c0c000"/>
<path d="M950.3000000000001 845 V841 Q950.3000000000001 837.5 953.8000000000001 837.5 H1088.8000000000002" fill="none" stroke="#000" stroke-opacity="0.3" stroke-width="1.5"/>
<text x="1021.8000000000001" y="901" font-size="14" fill="#333333" text-anchor="middle" font-weight="bold">Yellow</text>
<path d="M1101.6000000000001 905 V837 Q1101.6000000000001 831 1107.6000000000001 831 H1251.1000000000001 Q1257.1000000000001 831 1257.1000000000001 837 V905 Z" fill="#2a2a2a"/>
<rect x="1107.6000000000001" y="837" width="143.5" height="44.5" rx="5" fill="#ffffff"/>
<text x="1179.6000000000001" y="901" font-size="14" fill="#ffffff" text-anchor="middle" font-weight="bold">100W</text>
<rect x="1258" y="829" width="397" height="76" fill="#2c2c2c"/>
<path d="M1261.5 853 V836 Q1261.5 830.5 1267 830.5 H1321 V853 Z" fill="url(#mbg)"/>
<rect x="1261.5" y="854.5" width="59.5" height="51" fill="url(#mbg)"/>
<circle cx="1291" cy="842" r="11" fill="url(#mcg)"/>
<path d="M1285 845 L1291 838.5 L1297 845 Z" fill="#222"/>
<rect x="1272" y="862" width="38" height="36.5" rx="6" fill="#bdbdbd" stroke="#222" stroke-width="3"/>
<path d="M1273.5 880.5 H1308.5 V892 Q1308.5 897 1303.5 897 H1278.5 Q1273.5 897 1273.5 892 Z" fill="#9a9a9a"/>
<rect x="1283" y="872" width="17" height="17" fill="#000"/>
<rect x="1283" y="872" width="17" height="8.5" fill="#1c1c1c"/>
<rect x="1322" y="830.5" width="57.700000000000045" height="37" fill="url(#mbg)"/>
<circle cx="1350.85" cy="849" r="12.5" fill="url(#mcg)"/>
<rect x="1381" y="830.5" width="55" height="37" fill="url(#mbg)"/>
<circle cx="1408.5" cy="849" r="12.5" fill="url(#mcg)"/>
<rect x="1437.2" y="830.5" width="55.09999999999991" height="37" fill="url(#mbg)"/>
<circle cx="1464.75" cy="849" r="12.5" fill="url(#mcg)"/>
<rect x="1493.5" y="830.5" width="55.09999999999991" height="37" fill="url(#mbg)"/>
<circle cx="1521.05" cy="849" r="12.5" fill="url(#mcg)"/>
<rect x="1549.8" y="830.5" width="55.200000000000045" height="37" fill="url(#mbg)"/>
<circle cx="1577.4" cy="849" r="12.5" fill="url(#mcg)"/>
<rect x="1346" y="844" width="10" height="10" fill="#222"/>
<path d="M1405 843 L1415 849 L1405 855 Z" fill="#222"/>
<path d="M1461 842 H1458.5 V856 H1461 M1468.5 842 H1471 V856 H1468.5" fill="none" stroke="#262626" stroke-width="2.4"/>
<circle cx="1463.3" cy="849" r="1.1" fill="#262626"/><circle cx="1466.3" cy="849" r="1.1" fill="#262626"/>
<path d="M1521 849 C1518 845.5 1513.5 845.5 1513.5 849 C1513.5 852.5 1518 852.5 1521 849 C1524 845.5 1528.5 845.5 1528.5 849 C1528.5 852.5 1524 852.5 1521 849 Z" fill="none" stroke="#262626" stroke-width="2.6"/>
<path d="M1571 847 A6.5 6.5 0 0 1 1583 846 M1583 851 A6.5 6.5 0 0 1 1571 852" fill="none" stroke="#262626" stroke-width="2.4"/>
<path d="M1584.5 841 V848.5 H1577 Z M1569.5 857 V849.5 H1577 Z" fill="#262626"/>
<rect x="1322" y="869" width="170.5" height="40" fill="url(#mbg)"/>
<rect x="1494" y="869" width="170" height="40" fill="url(#mbg)"/>
<circle cx="1361.5" cy="888" r="12.5" fill="url(#mcg)"/>
<path d="M1361 882.5 L1356 888 L1361 893.5 M1366 882.5 L1361 888 L1366 893.5" fill="none" stroke="#262626" stroke-width="1.8"/>
<circle cx="1627" cy="888" r="12.5" fill="url(#mcg)"/>
<path d="M1622.5 882.5 L1627.5 888 L1622.5 893.5 M1627.5 882.5 L1632.5 888 L1627.5 893.5" fill="none" stroke="#262626" stroke-width="1.8"/>
<text x="1394" y="898" font-size="27" fill="#2c2c2c" textLength="63.5" lengthAdjust="spacingAndGlyphs" stroke="#2c2c2c" stroke-width="0.6">Back</text>
<text x="1528.5" y="898" font-size="27" fill="#2c2c2c" textLength="64" lengthAdjust="spacingAndGlyphs" stroke="#2c2c2c" stroke-width="0.6">Next</text>
<line x1="1633.5" y1="832.5" x2="1633.5" y2="864.5" stroke="#200000" stroke-width="7.5" opacity="0.5" stroke-linecap="round"/>
<line x1="1619.6" y1="840.5" x2="1647.4" y2="856.5" stroke="#200000" stroke-width="7.5" opacity="0.5" stroke-linecap="round"/>
<line x1="1647.4" y1="840.5" x2="1619.6" y2="856.5" stroke="#200000" stroke-width="7.5" opacity="0.5" stroke-linecap="round"/>
<line x1="1632.3" y1="831.5" x2="1632.3" y2="862.5" stroke="#e80000" stroke-width="7" stroke-linecap="round"/>
<line x1="1618.9" y1="839.2" x2="1645.7" y2="854.8" stroke="#e80000" stroke-width="7" stroke-linecap="round"/>
<line x1="1645.7" y1="839.2" x2="1618.9" y2="854.8" stroke="#e80000" stroke-width="7" stroke-linecap="round"/>
<polygon data-x points="1272.5,546.6 1272.4,546.6 1272.3,546.6 1272.2,546.6 1272.0,546.7 1271.9,546.7 1271.7,546.7 1271.5,546.7 1271.4,546.8 1271.4,546.9 1271.3,547.1 1271.1,547.1 1270.9,547.1 1270.6,547.1 1270.3,547.1 1270.0,547.1 1269.7,547.1 1269.3,547.0 1268.9,546.9 1268.4,546.7 1267.6,546.3 1266.7,545.7 1265.6,544.9 1264.3,544.0 1263.0,543.0 1261.3,541.7 1259.5,540.2 1257.3,538.6 1255.0,536.6 1252.5,534.3 1249.7,532.0 1246.6,529.4 1243.1,526.6 1239.3,523.4 1235.1,519.9 1230.4,516.0 1225.5,511.9 1220.1,507.4 1214.2,502.4 1207.8,496.8 1201.1,490.5 1193.9,483.5 1186.1,475.4 1177.3,465.6 1167.2,453.7 1156.2,439.7 1144.6,424.0 1132.2,406.6 1119.4,387.3 1106.2,366.4 1093.0,344.5 1079.9,321.8 1067.4,298.9 1055.8,276.0 1045.6,253.7 1036.8,232.5 1029.0,212.7 1022.6,194.6 1017.6,178.5 1013.9,164.3 1011.3,151.9 1009.7,141.3 1009.1,132.2 1009.5,124.2 1010.6,117.4 1012.4,111.6 1015.1,106.8 1018.4,102.8 1022.3,99.7 1026.8,97.5 1031.5,95.8 1036.7,94.8 1042.0,94.2 1047.7,93.7 1053.5,93.5 1059.3,93.4 1065.1,93.4 1071.0,93.5 1077.0,93.7 1083.1,93.9 1089.3,94.3 1095.8,94.7 1102.4,95.2 1109.3,95.8 1116.4,96.5 1123.8,97.1 1131.6,97.9 1139.5,98.7 1147.9,99.6 1156.5,100.5 1165.5,101.5 1174.9,102.5 1184.7,103.6 1194.9,104.7 1205.5,106.0 1216.5,107.2 1227.9,108.5 1239.8,109.9 1252.2,111.3 1264.9,112.8 1278.0,114.4 1291.6,115.9 1305.5,117.5 1319.9,119.1 1334.5,120.8 1349.3,122.5 1364.4,124.3 1379.5,126.0 1394.5,127.7 1409.1,129.4 1423.5,131.1 1438.0,132.8 1452.2,134.4 1465.8,136.0 1478.8,137.5 1491.2,138.8 1503.0,140.3 1514.2,141.5 1524.8,142.7 1534.6,143.8 1543.8,144.9 1552.4,145.9 1560.4,146.9 1567.8,147.6 1574.7,148.4 1581.2,149.2 1587.4,150.0 1593.3,150.6 1598.7,151.2 1603.8,151.9 1608.5,152.4 1613.0,152.9 1617.0,153.4 1620.6,153.8 1623.7,154.2 1626.6,154.5 1629.2,154.8 1631.5,155.0 1633.7,155.3 1635.5,155.5 1637.2,155.7 1638.5,155.8 1639.7,156.0 1640.8,156.1 1641.7,156.2 1642.7,156.3 1643.6,156.4 1644.3,156.5 1645.0,156.6 1645.8,156.7 1646.6,156.8 1647.4,156.9 1648.0,156.9 1648.6,157.0 1649.0,157.0 1649.4,157.1 1649.6,157.1 1649.8,157.2 1650.0,157.2 1650.1,157.2 1650.2,157.2" fill="none"/>
</svg>
<div id="fb1" style="position:absolute;left:1008px;top:83px;width:618px;height:476px;clip-path:polygon(264.46px 463.59px,264.36px 463.59px,264.26px 463.59px,264.15px 463.59px,264.05px 463.67px,263.95px 463.75px,263.74px 463.67px,263.53px 463.67px,263.43px 463.83px,263.43px 463.91px,263.33px 464.06px,263.12px 464.06px,262.92px 464.14px,262.61px 464.06px,262.3px 464.06px,261.99px 464.06px,261.68px 464.06px,261.27px 463.98px,260.85px 463.91px,260.44px 463.67px,259.62px 463.27px,258.69px 462.71px,257.56px 461.92px,256.32px 461.04px,254.98px 460.01px,253.33px 458.74px,251.48px 457.23px,249.31px 455.56px,247.04px 453.57px,244.47px 451.35px,241.68px 448.96px,238.59px 446.42px,235.09px 443.56px,231.28px 440.38px,227.05px 436.89px,222.41px 432.99px,217.47px 428.86px,212.11px 424.41px,206.23px 419.4px,199.84px 413.76px,193.14px 407.48px,185.93px 400.49px,178.1px 392.38px,169.34px 382.61px,159.24px 370.69px,148.21px 356.7px,136.56px 341.04px,124.2px 323.64px,111.42px 304.33px,98.23px 283.43px,85.03px 261.5px,71.95px 238.85px,59.37px 215.88px,47.83px 192.99px,37.63px 170.74px,28.76px 149.52px,21.03px 129.73px,14.64px 111.61px,9.59px 95.48px,5.88px 81.34px,3.31px 68.94px,1.66px 58.29px,1.14px 49.15px,1.45px 41.2px,2.59px 34.45px,4.44px 28.65px,7.12px 23.8px,10.42px 19.83px,14.33px 16.73px,18.77px 14.5px,23.51px 12.83px,28.66px 11.8px,34.02px 11.16px,39.69px 10.69px,45.46px 10.53px,51.33px 10.37px,57.1px 10.45px,62.98px 10.53px,68.96px 10.69px,75.14px 10.93px,81.32px 11.32px,87.82px 11.72px,94.41px 12.2px,101.32px 12.83px,108.43px 13.47px,115.85px 14.11px,123.58px 14.9px,131.51px 15.69px,139.86px 16.57px,148.52px 17.52px,157.48px 18.48px,166.86px 19.51px,176.65px 20.62px,186.86px 21.73px,197.47px 23.01px,208.5px 24.2px,219.94px 25.55px,231.79px 26.9px,244.16px 28.33px,256.94px 29.84px,270.03px 31.35px,283.63px 32.86px,297.54px 34.53px,311.87px 36.12px,326.5px 37.79px,341.34px 39.54px,356.39px 41.28px,371.54px 43.03px,386.48px 44.7px,401.12px 46.45px,415.55px 48.12px,429.98px 49.79px,444.2px 51.38px,457.8px 52.97px,470.79px 54.48px,483.15px 55.83px,495.01px 57.26px,506.24px 58.53px,516.75px 59.72px,526.65px 60.83px,535.82px 61.95px,544.37px 62.9px,552.41px 63.85px,559.83px 64.65px,566.74px 65.44px,573.23px 66.24px,579.41px 66.95px,585.29px 67.59px,590.75px 68.22px,595.8px 68.86px,600.54px 69.42px,604.97px 69.89px,608.99px 70.37px,612.6px 70.77px,615.69px 71.16px,618.58px 71.48px,621.15px 71.8px,623.52px 72.04px,625.69px 72.28px,627.54px 72.52px,629.19px 72.67px,630.53px 72.83px,631.66px 72.99px,632.8px 73.07px,633.73px 73.23px,634.65px 73.31px,635.58px 73.39px,636.3px 73.55px,637.02px 73.63px,637.85px 73.71px,638.57px 73.79px,639.39px 73.87px,640.01px 73.95px,640.63px 74.03px,641.04px 74.03px,641.35px 74.1px,641.56px 74.1px,641.76px 74.18px,641.97px 74.18px,642.07px 74.18px,642.18px 74.18px);background:conic-gradient(from 0deg at 203.2px 103.6px, #849900 0deg, #909000 5deg, #990000 80deg, #990099 124deg, #000099 185deg, #009090 260deg, #009900 304deg, #849900 360deg)"></div><div id="fb2" style="position:absolute;left:1008px;top:83px;width:618px;height:476px;clip-path:polygon(464.2px 61.16px,77.69px 19.21px,180.51px 351.22px);background:radial-gradient(circle at 203.20000000000005px 103.6px, #fff 0, rgba(255,255,255,0.6) 30px, rgba(255,255,255,0) 110px),conic-gradient(from 0deg at 203.2px 103.6px, #eaff00 0deg, #ffff00 5deg, #ff0000 80deg, #ff00ff 124deg, #0000ff 185deg, #00ffff 260deg, #00ff00 304deg, #eaff00 360deg)"></div><div id="fb3" style="position:absolute;left:638.5px;top:622.5px;width:330px;height:192px;background:radial-gradient(ellipse at 165px 95px, #fff 0, rgba(255,255,255,0.7) 60px, rgba(255,255,255,0) 200px),conic-gradient(from 0deg at 165px 95px, #dcffc0 0deg, #ffffc0 30deg, #ffb0c0 100deg, #ffa0d8 140deg, #e0c0ff 200deg, #a0d0ff 240deg, #a0ffff 270deg, #90ffc0 320deg, #dcffc0 360deg)"></div>
<canvas id="cie" width="618" height="476" style="left:1008px;top:83px"></canvas>
<canvas id="xyc" width="330" height="192" style="left:638.5px;top:622.5px"></canvas>
<svg width="1655" height="905" style="position:absolute;left:0;top:0"><rect x="1465.3" y="136.8" width="13" height="13" fill="none" stroke="#f0f0f0" stroke-width="2"/><rect x="1078.8" y="94.8" width="13" height="13" fill="none" stroke="#f0f0f0" stroke-width="2"/><rect x="1181.6" y="426.8" width="13" height="13" fill="none" stroke="#f0f0f0" stroke-width="2"/><rect x="1110.1" y="195.9" width="13" height="13" fill="none" stroke="#f0f0f0" stroke-width="2"/><rect x="1335.9" y="269.0" width="13" height="13" fill="none" stroke="#f0f0f0" stroke-width="2"/><rect x="1211.3" y="109.2" width="13" height="13" fill="none" stroke="#f0f0f0" stroke-width="2"/><circle cx="1440.1" cy="140.3" r="4.2" fill="#d00000" stroke="#111" stroke-width="1.2"/><circle cx="1155.3" cy="110.5" r="4.2" fill="#10a010" stroke="#111" stroke-width="1.2"/><circle cx="1193.5" cy="438.8" r="4.2" fill="#0000a0" stroke="#111" stroke-width="1.2"/><circle cx="1166.3" cy="205.7" r="4.2" fill="#10b0b0" stroke="#111" stroke-width="1.2"/><circle cx="1286.6" cy="326.9" r="4.2" fill="#b000b0" stroke="#111" stroke-width="1.2"/><circle cx="1202.4" cy="115.2" r="4.2" fill="#c0c000" stroke="#111" stroke-width="1.2"/><rect x="1204.7" y="180.1" width="13" height="13" fill="none" stroke="#000" stroke-width="2"/><circle cx="1205.6" cy="192.5" r="4.2" fill="#c0c0c0" stroke="#222" stroke-width="1.2"/><circle cx="1205.6" cy="189.2" r="4.2" fill="#ffffff" stroke="#222" stroke-width="1.2"/><rect x="1380" y="528" width="243" height="26" fill="#333"/><text x="1381" y="547.7" font-size="19.5" fill="#f4f4f4" textLength="213" lengthAdjust="spacingAndGlyphs">Gamut Coverage:  64,7%</text><rect x="796.5" y="710.5" width="14" height="14" fill="none" stroke="#000" stroke-width="2"/><circle cx="719.5" cy="747.5" r="4" fill="#b8b8b8" stroke="#222" stroke-width="1.2"/><circle cx="736.5" cy="737.5" r="4" fill="#ffffff" stroke="#222" stroke-width="1.2"/></svg>
<script>
(function(){
var M=[[2.0413690,-0.5649464,-0.3446944],[-0.9692660,1.8760108,0.0415560],[0.0134474,-0.1183897,1.0154096]];
function rgbOf(x,y,G){var X=x/y,Y=1,Z=(1-x-y)/y;
 var r=M[0][0]*X+M[0][1]*Y+M[0][2]*Z,g=M[1][0]*X+M[1][1]*Y+M[1][2]*Z,b=M[2][0]*X+M[2][1]*Y+M[2][2]*Z;
 var neg=(r<0||g<0||b<0);
 r=Math.max(r,0);g=Math.max(g,0);b=Math.max(b,0);var m=Math.max(r,g,b)||1;r/=m;g/=m;b/=m;
 r=Math.pow(r,G);g=Math.pow(g,G);b=Math.pow(b,G);return [r,g,b,neg];}
var LOC=[[264.46, 463.59], [264.36, 463.59], [264.26, 463.59], [264.15, 463.59], [264.05, 463.67], [263.95, 463.75], [263.74, 463.67], [263.53, 463.67], [263.43, 463.83], [263.43, 463.91], [263.33, 464.06], [263.12, 464.06], [262.92, 464.14], [262.61, 464.06], [262.3, 464.06], [261.99, 464.06], [261.68, 464.06], [261.27, 463.98], [260.85, 463.91], [260.44, 463.67], [259.62, 463.27], [258.69, 462.71], [257.56, 461.92], [256.32, 461.04], [254.98, 460.01], [253.33, 458.74], [251.48, 457.23], [249.31, 455.56], [247.04, 453.57], [244.47, 451.35], [241.68, 448.96], [238.59, 446.42], [235.09, 443.56], [231.28, 440.38], [227.05, 436.89], [222.41, 432.99], [217.47, 428.86], [212.11, 424.41], [206.23, 419.4], [199.84, 413.76], [193.14, 407.48], [185.93, 400.49], [178.1, 392.38], [169.34, 382.61], [159.24, 370.69], [148.21, 356.7], [136.56, 341.04], [124.2, 323.64], [111.42, 304.33], [98.23, 283.43], [85.03, 261.5], [71.95, 238.85], [59.37, 215.88], [47.83, 192.99], [37.63, 170.74], [28.76, 149.52], [21.03, 129.73], [14.64, 111.61], [9.59, 95.48], [5.88, 81.34], [3.31, 68.94], [1.66, 58.29], [1.14, 49.15], [1.45, 41.2], [2.59, 34.45], [4.44, 28.65], [7.12, 23.8], [10.42, 19.83], [14.33, 16.73], [18.77, 14.5], [23.51, 12.83], [28.66, 11.8], [34.02, 11.16], [39.69, 10.69], [45.46, 10.53], [51.33, 10.37], [57.1, 10.45], [62.98, 10.53], [68.96, 10.69], [75.14, 10.93], [81.32, 11.32], [87.82, 11.72], [94.41, 12.2], [101.32, 12.83], [108.43, 13.47], [115.85, 14.11], [123.58, 14.9], [131.51, 15.69], [139.86, 16.57], [148.52, 17.52], [157.48, 18.48], [166.86, 19.51], [176.65, 20.62], [186.86, 21.73], [197.47, 23.01], [208.5, 24.2], [219.94, 25.55], [231.79, 26.9], [244.16, 28.33], [256.94, 29.84], [270.03, 31.35], [283.63, 32.86], [297.54, 34.53], [311.87, 36.12], [326.5, 37.79], [341.34, 39.54], [356.39, 41.28], [371.54, 43.03], [386.48, 44.7], [401.12, 46.45], [415.55, 48.12], [429.98, 49.79], [444.2, 51.38], [457.8, 52.97], [470.79, 54.48], [483.15, 55.83], [495.01, 57.26], [506.24, 58.53], [516.75, 59.72], [526.65, 60.83], [535.82, 61.95], [544.37, 62.9], [552.41, 63.85], [559.83, 64.65], [566.74, 65.44], [573.23, 66.24], [579.41, 66.95], [585.29, 67.59], [590.75, 68.22], [595.8, 68.86], [600.54, 69.42], [604.97, 69.89], [608.99, 70.37], [612.6, 70.77], [615.69, 71.16], [618.58, 71.48], [621.15, 71.8], [623.52, 72.04], [625.69, 72.28], [627.54, 72.52], [629.19, 72.67], [630.53, 72.83], [631.66, 72.99], [632.8, 73.07], [633.73, 73.23], [634.65, 73.31], [635.58, 73.39], [636.3, 73.55], [637.02, 73.63], [637.85, 73.71], [638.57, 73.79], [639.39, 73.87], [640.01, 73.95], [640.63, 74.03], [641.04, 74.03], [641.35, 74.1], [641.56, 74.1], [641.76, 74.18], [641.97, 74.18], [642.07, 74.18], [642.18, 74.18]];var TRI=[[464.2, 61.16], [77.69, 19.21], [180.51, 351.22]];
var c=document.getElementById('cie'),ctx=c.getContext('2d');var W=c.width,H=c.height;
function mk(k){var off=document.createElement('canvas');off.width=W;off.height=H;var oc=off.getContext('2d');
var im=oc.createImageData(W,H),d=im.data;
for(var py=0;py<H;py++){for(var px=0;px<W;px++){
 var u=(px+0.5+1008-1007.700000)/1030.600000, v=(559.700000-(py+0.5+83))/794.700000;
 var den=6*u-16*v+12; var x=9*u/den, y=4*v/den; var i=(py*W+px)*4;
 if(v<=0.001){d[i+3]=0;continue;}
 var c3=rgbOf(x,y,1.150000);
 d[i]=c3[0]*255*k;d[i+1]=c3[1]*255*k;d[i+2]=c3[2]*255*k;d[i+3]=255;}}
oc.putImageData(im,0,0);return off;}
ctx.save();ctx.beginPath();ctx.moveTo(LOC[0][0],LOC[0][1]);for(var j=1;j<LOC.length;j++)ctx.lineTo(LOC[j][0],LOC[j][1]);ctx.closePath();ctx.clip();
ctx.drawImage(mk(0.600000),0,0);
ctx.beginPath();ctx.moveTo(TRI[0][0],TRI[0][1]);ctx.lineTo(TRI[1][0],TRI[1][1]);ctx.lineTo(TRI[2][0],TRI[2][1]);ctx.closePath();ctx.clip();
ctx.drawImage(mk(1),0,0);ctx.restore();
// CIE 1931 xy box
var c2=document.getElementById('xyc'),ct2=c2.getContext('2d');var W2=c2.width,H2=c2.height;
var im2=ct2.createImageData(W2,H2),d2=im2.data;
for(var py=0;py<H2;py++){for(var px=0;px<W2;px++){
 var x=0.2877+0.05*(px+0.5)/W2, y=0.354-0.05*(py+0.5)/H2; var i=(py*W2+px)*4;
 var c3=rgbOf(x,y,1.250000); d2[i]=c3[0]*255;d2[i+1]=c3[1]*255;d2[i+2]=c3[2]*255;d2[i+3]=255;}}
ct2.putImageData(im2,0,0);
['fb1','fb2','fb3'].forEach(function(i){document.getElementById(i).style.display='none';});
})();
</script>
</body></html>
